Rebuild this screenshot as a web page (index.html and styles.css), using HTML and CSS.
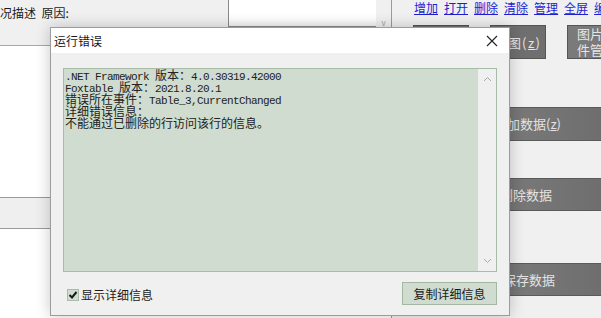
FILE: index.html
```html
<!DOCTYPE html>
<html lang="zh-CN">
<head>
  <meta charset="UTF-8" />
  <title>运行错误</title>
  <link rel="stylesheet" href="styles.css">
</head>
<body>
  <div class="screen">
    <div class="main">
      <div class="toprow">
        <div class="caption">况描述&nbsp;&nbsp;原因:</div>
        <div class="field"></div>
        <div class="strip">v</div>
      </div>
      <div class="area"></div>
      <div class="band"></div>
      <div class="area"></div>
    </div>

    <div class="side">
      <div class="links">
        <a href="#">增加</a>
        <a href="#">打开</a>
        <a href="#">删除</a>
        <a href="#">清除</a>
        <a href="#">管理</a>
        <a href="#">全屏</a>
        <a href="#">编辑</a>
      </div>
      <div class="tools">
        <div class="tool">导出</div>
        <div class="tool left">制图<span class="key">(<u>z</u>)</span></div>
        <div class="tool wide">图片文<br>件管理</div>
      </div>
      <div class="action first">增加数据(<u>z</u>)</div>
      <div class="action second">删除数据</div>
      <div class="action third">保存数据</div>
    </div>

    <div class="dialog">
      <div class="titlebar">
        <span>运行错误</span>
        <svg class="close" width="12" height="12" viewBox="0 0 12 12">
          <path d="M1 1 L11 11 M11 1 L1 11" stroke="#222" stroke-width="1.1" fill="none"/>
        </svg>
      </div>
      <div class="dialog-body">
        <div class="log">
          <div class="lines">
            <div class="line">.NET Framework <span class="cn">版本：</span>4.0.30319.42000</div>
            <div class="line">Foxtable <span class="cn">版本：</span>2021.8.20.1</div>
            <div class="line"><span class="cn">错误所在事件：</span>Table_3,CurrentChanged</div>
            <div class="line"><span class="cn">详细错误信息：</span></div>
            <div class="line"><span class="cn">不能通过已删除的行访问该行的信息。</span></div>
          </div>
          <div class="scroll">
            <svg width="9" height="6" viewBox="0 0 9 6"><path d="M1 5 L4.5 1.5 L8 5" stroke="#a8a8a8" fill="none"/></svg>
            <svg width="9" height="6" viewBox="0 0 9 6"><path d="M1 1 L4.5 4.5 L8 1" stroke="#a8a8a8" fill="none"/></svg>
          </div>
        </div>
        <div class="footer">
          <label class="check">
            <span class="box">
              <svg width="10" height="10" viewBox="0 0 10 10"><path d="M1.5 5 L4 7.5 L8.5 2" stroke="#1a1a1a" stroke-width="2" fill="none"/></svg>
            </span>
            显示详细信息
          </label>
          <button class="copy">复制详细信息</button>
        </div>
      </div>
    </div>
  </div>
</body>
</html>
```

FILE: styles.css
```css
body {
  margin: 0;
  font-family: "Noto Sans CJK SC", "Liberation Sans", sans-serif;
  font-size: 12px;
  color: #1a1a1a;
  overflow: hidden;
}

.screen {
  position: relative;
  width: 601px;
  height: 318px;
  display: flex;
  background: #f0f0f0;
}

.main {
  width: 391px;
  display: flex;
  flex-direction: column;
  background: #fff;
}

.toprow {
  height: 45px;
  display: flex;
  align-items: flex-start;
  background: #f0f0f0;
  border-bottom: 1px solid #a8a8a8;
}

.caption {
  width: 228px;
  height: 27px;
  line-height: 26px;
  white-space: nowrap;
  font-size: 12px;
}

.field {
  width: 147px;
  height: 26px;
  background: linear-gradient(#fff 70%, #f4f4f4);
  border-left: 1px solid #8a8a8a;
  border-bottom: 1px solid #8a8a8a;
}

.strip {
  width: 15px;
  height: 27px;
  font-size: 8px;
  color: #999;
  text-align: center;
  line-height: 46px;
}

.area {
  height: 151px;
  background: #fff;
}

.area:last-child {
  flex: 1;
}

.band {
  height: 30px;
  background: #efefef;
  border-top: 1px solid #9a9a9a;
  border-bottom: 1px solid #9a9a9a;
}

.side {
  flex: 1;
  border-left: 1px solid #9a9a9a;
  background: #f0f0f0;
  display: flex;
  flex-direction: column;
  padding-left: 22px;
  overflow: hidden;
}

.links {
  display: flex;
  gap: 6px;
  height: 25px;
  line-height: 16px;
  white-space: nowrap;
}

.links a {
  color: #1f1fd2;
  text-decoration: underline;
}

.tools {
  display: flex;
  gap: 21px;
  height: 34px;
  margin-left: -1px;
}

.tool {
  width: 56px;
  flex-shrink: 0;
  background: #6f6f6f;
  border: 1px solid #555;
  box-sizing: border-box;
  color: #e6e6e6;
  font-size: 13px;
  display: flex;
  align-items: center;
  justify-content: center;
  white-space: nowrap;
  overflow: hidden;
}

.tool.left {
  justify-content: flex-start;
  padding-left: 4px;
}

.key {
  letter-spacing: 1.5px;
  margin-left: 1px;
}

.tool.wide {
  width: 70px;
  line-height: 16px;
  justify-content: flex-start;
  padding-left: 9px;
  background: #7a7a7a;
}

.action {
  height: 34px;
  margin-right: -2px;
  box-sizing: border-box;
  background: linear-gradient(90deg, #6a6a6a, #777 60%, #6e6e6e);
  border-top: 1px solid #5a5a5a;
  border-bottom: 1px solid #5a5a5a;
  color: #e4e4e4;
  font-size: 13px;
  line-height: 32px;
  padding-left: 80px;
  white-space: nowrap;
}

.action.first { margin-top: 48px; }
.action.second { margin-top: 37px; height: 33px; padding-left: 86px; }
.action.third { margin-top: 52px; height: 33px; padding-left: 89px; }

.dialog {
  position: absolute;
  left: 50px;
  top: 27px;
  width: 460px;
  height: 289px;
  box-sizing: border-box;
  border: 1px solid #9c9c9c;
  background: #f0f0f0;
  box-shadow: 0 0 14px rgba(0, 0, 0, 0.22);
  display: flex;
  flex-direction: column;
}

.titlebar {
  height: 25px;
  background: #fff;
  display: flex;
  align-items: center;
  justify-content: space-between;
  padding: 0 11px 0 3px;
  font-size: 12px;
}

.close {
  display: block;
}

.dialog-body {
  flex: 1;
  padding: 15px 12px 0 12px;
  display: flex;
  flex-direction: column;
}

.log {
  height: 204px;
  box-sizing: border-box;
  background: #cfdccf;
  border: 1px solid #a6bca7;
  display: flex;
}

.lines {
  flex: 1;
  padding: 0 0 0 1px;
  font-family: "Liberation Mono", monospace;
  font-size: 11px;
  letter-spacing: -0.6px;
  color: #222;
}

.line {
  height: 12px;
  line-height: 12px;
  white-space: pre;
}

.cn {
  font-family: "Noto Sans CJK SC", sans-serif;
  font-size: 12px;
  letter-spacing: 0;
  line-height: 12px;
}

.scroll {
  width: 18px;
  background: #f0f0f0;
  display: flex;
  flex-direction: column;
  justify-content: space-between;
  align-items: center;
  padding: 7px 0 7px;
}

.scroll svg {
  display: block;
}

.footer {
  display: flex;
  justify-content: space-between;
  align-items: center;
  margin-top: 10px;
}

.check {
  display: flex;
  align-items: center;
  gap: 2px;
  padding-left: 4px;
  margin-top: 2px;
}

.box {
  width: 12px;
  height: 12px;
  box-sizing: border-box;
  background: #d2ddd2;
  border: 1px solid #a9bca9;
  display: flex;
  align-items: center;
  justify-content: center;
}

.copy {
  width: 95px;
  height: 23px;
  background: #cfdccf;
  border: 1px solid #a2b8a3;
  font-family: "Noto Sans CJK SC", sans-serif;
  font-size: 12px;
  color: #1a1a1a;
  padding: 0;
}
```
